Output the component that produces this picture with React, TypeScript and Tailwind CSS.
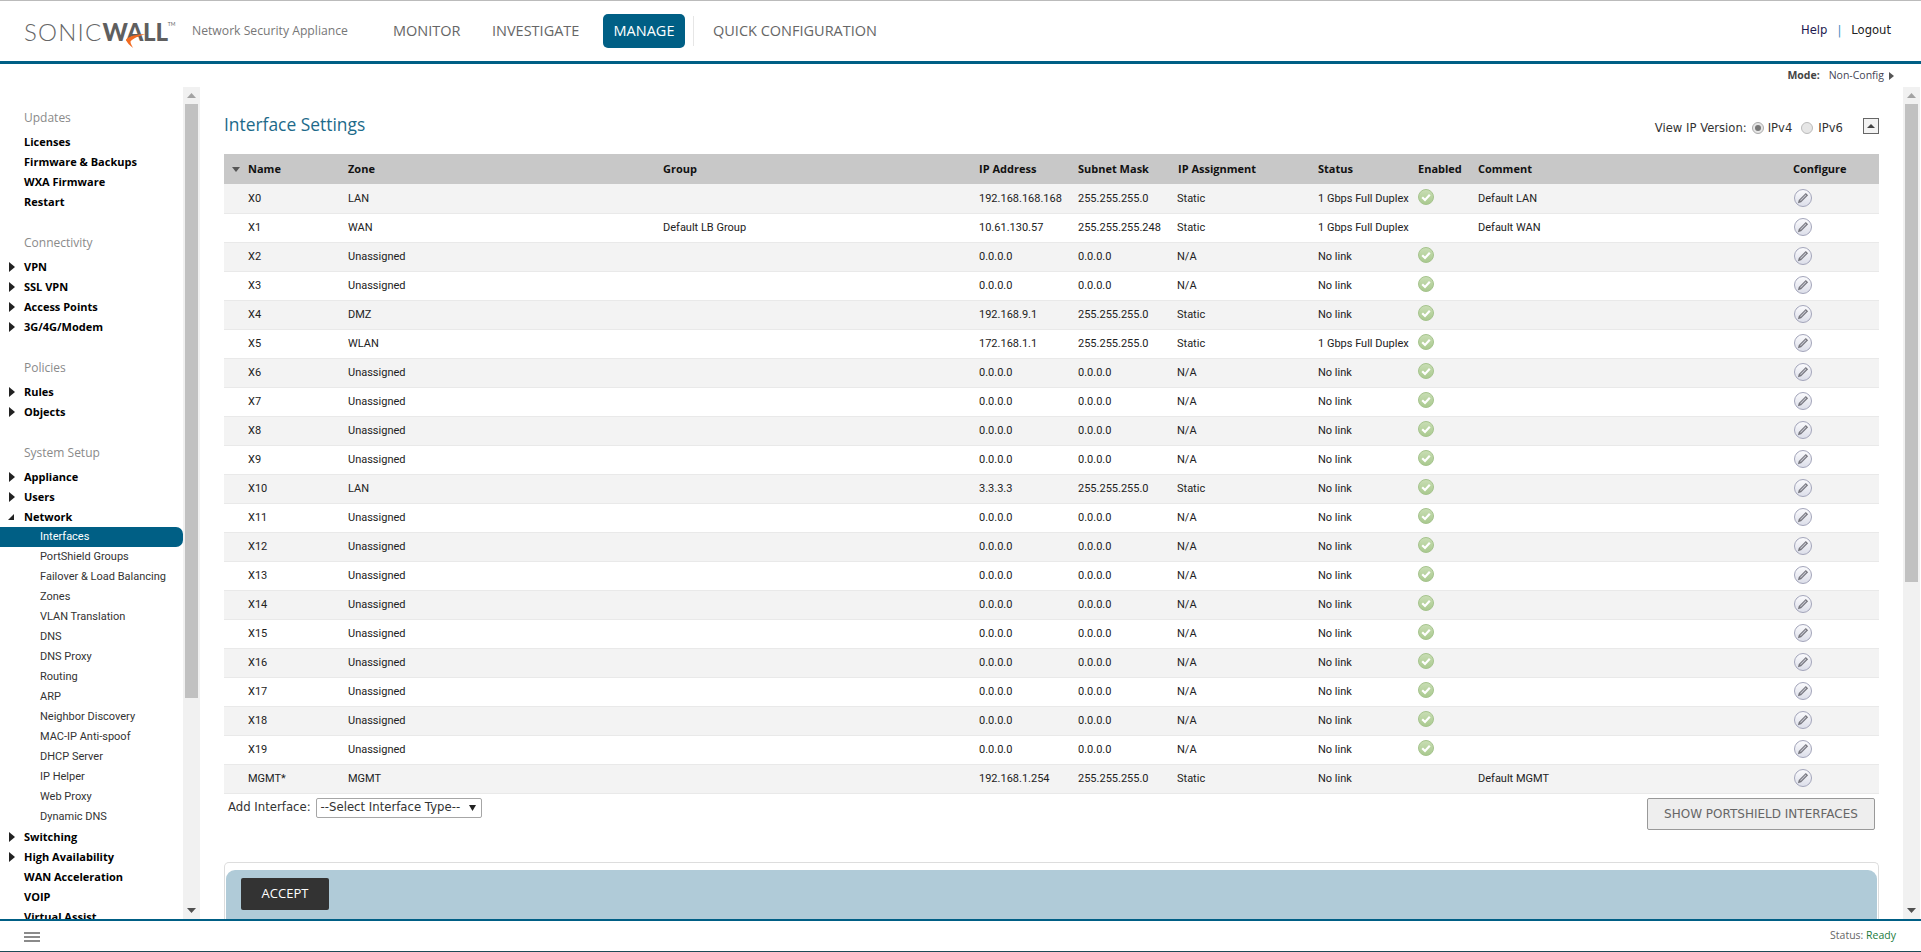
const FONT = 'font-["Open_Sans",sans-serif]';
const BODY = 'font-["Roboto",sans-serif]';
const WIDE = 'font-["DejaVu_Sans",sans-serif]';

type Row = [string, string, string, string, string, string, string, boolean, string];

const rows: Row[] = [
  ['X0', 'LAN', '', '192.168.168.168', '255.255.255.0', 'Static', '1 Gbps Full Duplex', true, 'Default LAN'],
  ['X1', 'WAN', 'Default LB Group', '10.61.130.57', '255.255.255.248', 'Static', '1 Gbps Full Duplex', false, 'Default WAN'],
  ['X2', 'Unassigned', '', '0.0.0.0', '0.0.0.0', 'N/A', 'No link', true, ''],
  ['X3', 'Unassigned', '', '0.0.0.0', '0.0.0.0', 'N/A', 'No link', true, ''],
  ['X4', 'DMZ', '', '192.168.9.1', '255.255.255.0', 'Static', 'No link', true, ''],
  ['X5', 'WLAN', '', '172.168.1.1', '255.255.255.0', 'Static', '1 Gbps Full Duplex', true, ''],
  ['X6', 'Unassigned', '', '0.0.0.0', '0.0.0.0', 'N/A', 'No link', true, ''],
  ['X7', 'Unassigned', '', '0.0.0.0', '0.0.0.0', 'N/A', 'No link', true, ''],
  ['X8', 'Unassigned', '', '0.0.0.0', '0.0.0.0', 'N/A', 'No link', true, ''],
  ['X9', 'Unassigned', '', '0.0.0.0', '0.0.0.0', 'N/A', 'No link', true, ''],
  ['X10', 'LAN', '', '3.3.3.3', '255.255.255.0', 'Static', 'No link', true, ''],
  ['X11', 'Unassigned', '', '0.0.0.0', '0.0.0.0', 'N/A', 'No link', true, ''],
  ['X12', 'Unassigned', '', '0.0.0.0', '0.0.0.0', 'N/A', 'No link', true, ''],
  ['X13', 'Unassigned', '', '0.0.0.0', '0.0.0.0', 'N/A', 'No link', true, ''],
  ['X14', 'Unassigned', '', '0.0.0.0', '0.0.0.0', 'N/A', 'No link', true, ''],
  ['X15', 'Unassigned', '', '0.0.0.0', '0.0.0.0', 'N/A', 'No link', true, ''],
  ['X16', 'Unassigned', '', '0.0.0.0', '0.0.0.0', 'N/A', 'No link', true, ''],
  ['X17', 'Unassigned', '', '0.0.0.0', '0.0.0.0', 'N/A', 'No link', true, ''],
  ['X18', 'Unassigned', '', '0.0.0.0', '0.0.0.0', 'N/A', 'No link', true, ''],
  ['X19', 'Unassigned', '', '0.0.0.0', '0.0.0.0', 'N/A', 'No link', true, ''],
  ['MGMT*', 'MGMT', '', '192.168.1.254', '255.255.255.0', 'Static', 'No link', false, 'Default MGMT'],
];

const Check = () => (
  <svg width="16" height="16" viewBox="0 0 16 16" className="block -mt-[3px]">
    <defs>
      <linearGradient id="chk" x1="0" y1="0" x2="0" y2="1">
        <stop offset="0" stopColor="#c9deb5" />
        <stop offset="1" stopColor="#a9c98e" />
      </linearGradient>
    </defs>
    <circle cx="8" cy="8" r="7.5" fill="url(#chk)" stroke="#a6c48e" />
    <path d="M4.2 8.2 7 11l4.8-5.2" fill="none" stroke="#fff" strokeWidth="2.2" />
  </svg>
);

const Pencil = () => (
  <svg width="18" height="18" viewBox="0 0 18 18" className="-mt-px block">
    <defs>
      <linearGradient id="pen" x1="0" y1="0" x2="0" y2="1">
        <stop offset="0" stopColor="#fbfbfd" />
        <stop offset="1" stopColor="#dcdee9" />
      </linearGradient>
    </defs>
    <circle cx="9" cy="9" r="8.500" fill="url(#pen)" stroke="#a3a5ba" />
    <path d="M11.800 3.900l2.300 2.300-7 7-3.200 1 .9-3.300z" fill="#77777f" />
    <path d="M11.700 5.600l.7.7-5.600 5.600-.7-.7z" fill="#c9cad4" />
  </svg>
);

const Arrow = ({ open }: { open?: boolean }) =>
  open ? (
    <svg width="6" height="6" viewBox="0 0 6 6" className="ml-[8px] mr-[10px]">
      <path d="M6 0v6H0z" fill="#222" />
    </svg>
  ) : (
    <svg width="6" height="10" viewBox="0 0 6 10" className="ml-[9px] mr-[9px]">
      <path d="M0 0l6 5-6 5z" fill="#222" />
    </svg>
  );

const Item = ({ label, arrow, open }: { label: string; arrow?: boolean; open?: boolean }) => (
  <div className="flex h-5 items-center text-[11px] font-bold text-black">
    {arrow ? <Arrow open={open} /> : <span className="w-6" />}
    {label}
  </div>
);

const Heading = ({ label }: { label: string }) => (
  <div className="mb-[5px] flex h-5 items-center pl-6 pt-px text-[12px] text-[#8a8a8a]">{label}</div>
);

const networkItems = [
  'PortShield Groups',
  'Failover & Load Balancing',
  'Zones',
  'VLAN Translation',
  'DNS',
  'DNS Proxy',
  'Routing',
  'ARP',
  'Neighbor Discovery',
  'MAC-IP Anti-spoof',
  'DHCP Server',
  'IP Helper',
  'Web Proxy',
  'Dynamic DNS',
];

const Scrollbar = ({ thumb }: { thumb: string }) => (
  <div className="flex h-full w-[17px] shrink-0 flex-col items-center bg-[#f1f1f1]">
    <div className="flex h-[17px] w-full items-center justify-center">
      <svg width="9" height="5" viewBox="0 0 9 5">
        <path d="M4.500 0L9 5H0z" fill="#a3a3a3" />
      </svg>
    </div>
    <div className={`w-[13px] bg-[#c1c1c1] ${thumb}`} />
    <div className="flex-1" />
    <div className="flex h-[17px] w-full items-center justify-center">
      <svg width="9" height="5" viewBox="0 0 9 5">
        <path d="M4.500 5L9 0H0z" fill="#505050" />
      </svg>
    </div>
  </div>
);

const Logo = () => (
  <div className='relative mt-[2px] flex w-[150px] shrink-0 items-start font-["Lato",sans-serif] text-[24px] leading-[30px] text-[#666]'>
    <span className="font-light tracking-[1.2px]">SONIC</span>
    <span className="font-black tracking-[-0.2px] text-[#5f5f5f]">WALL</span>
    <span className="mt-[4px] text-[5px] leading-[6px]">TM</span>
    <svg width="22" height="15" viewBox="0 0 24 16" className="absolute left-[101px] top-[17px]">
      <path d="M22 0C13 0 5 1.500 1 6c1 3 4 6 8 9-2-3-3-5-3-7 3-4 9-6 16-8z" fill="#f26b21" />
    </svg>
  </div>
);

export default function App() {
  return (
    <div className={`flex h-[952px] w-full flex-col overflow-hidden bg-white ${FONT} text-[11px] text-[#222]`}>
      <header className="flex h-[64px] shrink-0 items-center border-t border-b-[3px] border-t-[#bbb] border-b-[#005f85] pl-6 pr-[30px]">
        <Logo />
        <span className="ml-[18px] w-[156px] shrink-0 whitespace-nowrap text-[12.2px] text-[#777]">Network Security Appliance</span>
        <nav className="ml-[45px] flex items-center whitespace-nowrap text-[14.5px] text-[#666]">
          <span className="w-[66px]">MONITOR</span>
          <span className="ml-[33px] w-[91px]">INVESTIGATE</span>
          <span className="ml-[20px] flex h-[34px] w-[82px] items-center justify-center rounded-[5px] bg-[#005f85] text-white">
            MANAGE
          </span>
          <span className="ml-[8px] h-[30px] w-px bg-[#e6e6e6]" />
          <span className="ml-[19px]">QUICK CONFIGURATION</span>
        </nav>
        <div className={`ml-auto flex items-center gap-[10px] ${WIDE} text-[11.6px] text-[#222]`}>
          <span className="text-[#1d1a50]">Help</span>
          <span className="text-[#4a90c2]">|</span>
          <span>Logout</span>
        </div>
      </header>

      <div className="flex h-[23px] shrink-0 items-center justify-end pr-[27px] text-[10.5px]">
        <span className="font-bold text-[#444]">Mode:</span>
        <span className="ml-[9px] text-[#445]">Non-Config</span>
        <svg width="5" height="8" viewBox="0 0 5 8" className="ml-[5px]">
          <path d="M0 0l5 4-5 4z" fill="#555" />
        </svg>
      </div>

      <div className="flex min-h-0 flex-1">
        <aside className="flex w-[200px] shrink-0">
          <div className="w-[183px] overflow-hidden pt-5">
            <div className="mb-5">
              <Heading label="Updates" />
              <Item label="Licenses" />
              <Item label="Firmware & Backups" />
              <Item label="WXA Firmware" />
              <Item label="Restart" />
            </div>
            <div className="mb-5">
              <Heading label="Connectivity" />
              <Item label="VPN" arrow />
              <Item label="SSL VPN" arrow />
              <Item label="Access Points" arrow />
              <Item label="3G/4G/Modem" arrow />
            </div>
            <div className="mb-5">
              <Heading label="Policies" />
              <Item label="Rules" arrow />
              <Item label="Objects" arrow />
            </div>
            <Heading label="System Setup" />
            <Item label="Appliance" arrow />
            <Item label="Users" arrow />
            <Item label="Network" arrow open />
            <div className={`flex h-5 items-center rounded-r-[7px] bg-[#005f85] pl-10 pt-px ${BODY} text-white`}>Interfaces</div>
            {networkItems.map(n => (
              <div key={n} className={`flex h-5 items-center pl-10 pt-px ${BODY} text-[#333]`}>
                {n}
              </div>
            ))}
            <Item label="Switching" arrow />
            <Item label="High Availability" arrow />
            <Item label="WAN Acceleration" />
            <Item label="VOIP" />
            <Item label="Virtual Assist" />
          </div>
          <Scrollbar thumb="h-[594px]" />
        </aside>

        <main className="min-w-0 flex-1 overflow-hidden pl-6 pr-6">
          <div className="flex h-[67px] justify-between">
            <h1 className="mt-[24px] text-[17.4px] leading-[26px] text-[#1d6a8a]">Interface Settings</h1>
            <div className={`mt-[32px] flex h-5 items-center ${WIDE} text-[11.6px] text-[#333]`}>
              <span>View IP Version:</span>
              <span className="-mt-[2px] ml-[5px] flex h-3 w-3 items-center justify-center rounded-full border border-[#aaa] bg-[#e6e6e6]">
                <span className="h-[6px] w-[6px] rounded-full bg-[#777]" />
              </span>
              <span className="ml-[4px]">IPv4</span>
              <span className="-mt-[2px] ml-[9px] h-3 w-3 rounded-full border border-[#bbb] bg-[#e6e6e6]" />
              <span className="ml-[5px]">IPv6</span>
              <span className="-mt-[7px] ml-[20px] flex h-4 w-4 items-center justify-center border border-[#666] bg-[#f3f3f3]">
                <svg width="8" height="4" viewBox="0 0 8 4">
                  <path d="M4 0l4 4H0z" fill="#444" />
                </svg>
              </span>
            </div>
          </div>

          <table className="w-[1655px] table-fixed border-collapse text-left">
            <colgroup>
              <col className="w-[124px]" />
              <col className="w-[315px]" />
              <col className="w-[316px]" />
              <col className="w-[99px]" />
              <col className="w-[99px]" />
              <col className="w-[141px]" />
              <col className="w-[100px]" />
              <col className="w-[60px]" />
              <col className="w-[315px]" />
              <col className="w-[86px]" />
            </colgroup>
            <thead>
              <tr className="h-[30px] bg-[#c8c8c8] text-[11px] font-bold text-[#111]">
                <th className="relative pl-6 font-bold">
                  <svg width="8" height="5" viewBox="0 0 8 5" className="absolute left-[8px] top-[13px]">
                    <path d="M0 0h8L4 5z" fill="#555" />
                  </svg>
                  Name
                </th>
                <th className="font-bold">Zone</th>
                <th className="font-bold">Group</th>
                <th className="font-bold">IP Address</th>
                <th className="font-bold">Subnet Mask</th>
                <th className="pl-px font-bold">IP Assignment</th>
                <th className="font-bold">Status</th>
                <th className="font-bold">Enabled</th>
                <th className="font-bold">Comment</th>
                <th className="font-bold">Configure</th>
              </tr>
            </thead>
            <tbody className={BODY}>
              {rows.map((r, i) => (
                <tr key={r[0]} className={`h-[29px] border-b border-[#e9e9e9] ${i % 2 === 0 ? 'bg-[#f3f3f3]' : 'bg-white'}`}>
                  <td className="pl-6 pt-px">{r[0]}</td>
                  <td className="pt-px">{r[1]}</td>
                  <td className="pt-px">{r[2]}</td>
                  <td className="pt-px">{r[3]}</td>
                  <td className="pt-px">{r[4]}</td>
                  <td className="pt-px">{r[5]}</td>
                  <td className="whitespace-nowrap pt-px">{r[6]}</td>
                  <td>{r[7] && <Check />}</td>
                  <td className="pt-px">{r[8]}</td>
                  <td className="pl-[1px]">
                    <Pencil />
                  </td>
                </tr>
              ))}
            </tbody>
          </table>

          <div className="mt-[4px] flex items-start justify-between px-1">
            <div className={`flex items-center ${WIDE} text-[11.7px] text-[#333]`}>
              <span>Add Interface:</span>
              <div className="ml-[5px] flex h-5 w-[166px] items-center justify-between rounded-[2px] border border-[#a6a6a6] bg-white pl-[4px] pr-[5px]">
                <span className="whitespace-nowrap">--Select Interface Type--</span>
                <svg width="7" height="6" viewBox="0 0 7 6" className="shrink-0">
                  <path d="M0 0h7L3.500 6z" fill="#222" />
                </svg>
              </div>
            </div>
            <button className={`h-8 w-[228px] rounded-[2px] border border-[#999] bg-[#eee] ${WIDE} text-[12px] text-[#666]`}>
              SHOW PORTSHIELD INTERFACES
            </button>
          </div>

          <div className="mt-[32px] rounded-t-[5px] border border-b-0 border-[#ddd] px-px pt-[7px]">
            <div className="h-[100px] rounded-t-[9px] bg-[#b0cbd8] pl-[15px] pt-2">
              <button className="h-8 w-[88px] rounded-[2px] bg-[#333] pt-px text-[13px] text-white">ACCEPT</button>
            </div>
          </div>
        </main>

        <Scrollbar thumb="h-[478px]" />
        <div className="w-px shrink-0" />
      </div>

      <footer className="flex h-[33px] shrink-0 items-center justify-between border-t-2 border-b border-t-[#005f85] border-b-[#1d4a56] pl-6 pr-[25px]">
        <div className="mt-px flex w-4 flex-col gap-[2px]">
          <span className="h-[2px] bg-[#8a8a8a]" />
          <span className="h-[2px] bg-[#8a8a8a]" />
          <span className="h-[2px] bg-[#8a8a8a]" />
        </div>
        <div className="text-[10.5px] text-[#666]">
          Status: <span className="text-[#1a7a3c]">Ready</span>
        </div>
      </footer>
    </div>
  );
}
